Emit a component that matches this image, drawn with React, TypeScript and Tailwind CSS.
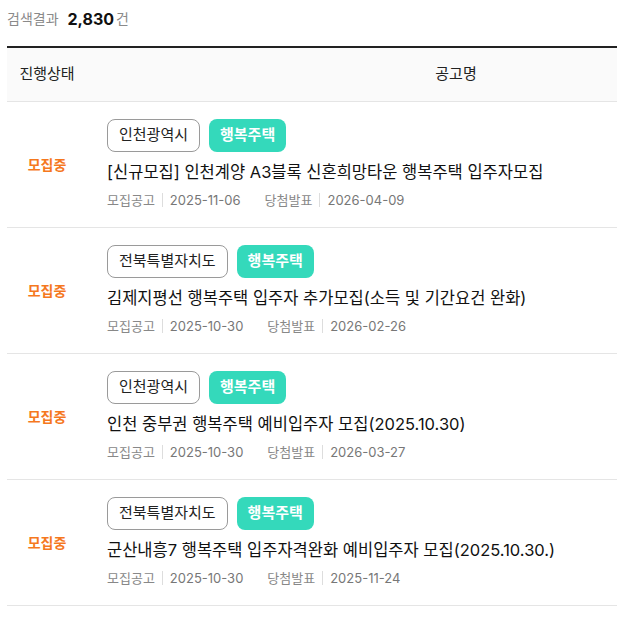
const rows = [
  {
    region: "인천광역시",
    title: "[신규모집] 인천계양 A3블록 신혼희망타운 행복주택 입주자모집",
    notice: "2025-11-06",
    result: "2026-04-09",
  },
  {
    region: "전북특별자치도",
    title: "김제지평선 행복주택 입주자 추가모집(소득 및 기간요건 완화)",
    notice: "2025-10-30",
    result: "2026-02-26",
  },
  {
    region: "인천광역시",
    title: "인천 중부권 행복주택 예비입주자 모집(2025.10.30)",
    notice: "2025-10-30",
    result: "2026-03-27",
  },
  {
    region: "전북특별자치도",
    title: "군산내흥7 행복주택 입주자격완화 예비입주자 모집(2025.10.30.)",
    notice: "2025-10-30",
    result: "2025-11-24",
  },
];

export default function App() {
  return (
    <div
      className="w-[617px] overflow-hidden bg-white pl-[7px]"
      style={{ fontFamily: "Inter, 'Noto Sans CJK KR', sans-serif" }}
    >
      <div className="w-[818px]">
        <div className="flex h-[46px] items-start pt-[7px] text-[14px] leading-[24px]">
          <span className="text-[#8a8a8a]">검색결과</span>
          <span className="ml-[9px] text-[16px] font-bold text-[#111]">2,830</span>
          <span className="ml-[2px] text-[#8a8a8a]">건</span>
        </div>
        <div className="flex h-[56px] items-center border-t-2 border-b border-t-[#222] border-b-[#e5e5e5] bg-[#fafafa] text-[15px] text-[#222]">
          <div className="w-[80px] text-center">진행상태</div>
          <div className="flex-1 text-center">공고명</div>
        </div>
        {rows.map((r, i) => (
          <div key={i} className="flex h-[126px] items-center border-b border-[#e5e5e5]">
            <div className="w-[80px] text-center text-[14px] font-bold text-[#f5781e]">모집중</div>
            <div className="flex flex-1 flex-col pl-[20px]">
              <div className="flex gap-[9px]">
                <span className="flex h-[33px] items-center rounded-[8px] border border-[#9a9a9a] px-[11px] text-[15px] text-[#222]">
                  {r.region}
                </span>
                <span className="flex h-[33px] items-center rounded-[8px] bg-[#34d9bb] px-[11px] text-[15px] font-bold text-white">
                  행복주택
                </span>
              </div>
              <div className="mt-[8px] text-[16.5px] leading-[24px] text-[#111]">{r.title}</div>
              <div className="mt-[6px] flex items-center text-[13px] leading-[20px] text-[#888]">
                <span>모집공고</span>
                <span className="mx-[7px] h-[14px] w-px bg-[#ddd]" />
                <span className="text-[#777]">{r.notice}</span>
                <span className="ml-[24px]">당첨발표</span>
                <span className="mx-[7px] h-[14px] w-px bg-[#ddd]" />
                <span className="text-[#777]">{r.result}</span>
              </div>
            </div>
          </div>
        ))}
      </div>
    </div>
  );
}
